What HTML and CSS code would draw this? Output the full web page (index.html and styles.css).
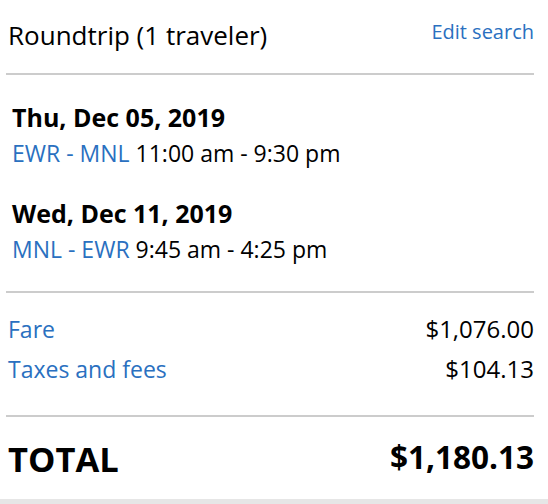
FILE: index.html
```html
<!DOCTYPE html>
<html>
<head>
<meta charset="utf-8">
<link rel="stylesheet" href="styles.css">
</head>
<body>
<div class="summary">
  <div class="header">
    <div class="title">Roundtrip (1 traveler)</div>
    <a class="edit" href="#">Edit search</a>
  </div>
  <div class="flights">
    <div class="flight">
      <div class="date">Thu, Dec 05, 2019</div>
      <div class="route"><span class="code">EWR - MNL</span> 11:00 am - 9:30 pm</div>
    </div>
    <div class="flight">
      <div class="date">Wed, Dec 11, 2019</div>
      <div class="route"><span class="code">MNL - EWR</span> 9:45 am - 4:25 pm</div>
    </div>
  </div>
  <div class="costs">
    <div class="cost-row"><span class="label">Fare</span><span class="amount">$1,076.00</span></div>
    <div class="cost-row"><span class="label">Taxes and fees</span><span class="amount">$104.13</span></div>
  </div>
  <div class="total">
    <span class="total-label">TOTAL</span>
    <span class="total-amount">$1,180.13</span>
  </div>
</div>
<div class="footer"></div>
</body>
</html>
```
FILE: styles.css
```css
html, body {
  margin: 0;
  padding: 0;
  background: #fff;
}
body {
  font-family: "Open Sans", "Liberation Sans", sans-serif;
  color: #000;
  width: 548px;
  height: 504px;
  display: flex;
  flex-direction: column;
  overflow: hidden;
}
.summary {
  margin: 0 14px 0 6px;
  flex: 1;
}
.header {
  display: flex;
  justify-content: space-between;
  align-items: flex-start;
  padding: 17px 0 20px 2px;
  border-bottom: 2px solid #ccc;
}
.title {
  font-size: 26px;
  line-height: 36px;
}
.edit {
  margin-top: 1px;
  font-size: 20px;
  line-height: 27px;
  color: #2a70c0;
  text-decoration: none;
}
.flights {
  padding: 24px 0 24px 6px;
  border-bottom: 2px solid #ccc;
}
.flight + .flight {
  margin-top: 24px;
}
.date {
  font-weight: 700;
  font-size: 25px;
  line-height: 36px;
}
.route {
  font-size: 23px;
  line-height: 36px;
}
.code {
  color: #2a70c0;
}
.costs {
  padding: 16px 0 26px 2px;
  border-bottom: 2px solid #ccc;
}
.cost-row {
  display: flex;
  justify-content: space-between;
  line-height: 40px;
}
.label {
  font-size: 23px;
  color: #2a70c0;
}
.amount {
  font-size: 24px;
}
.total {
  display: flex;
  justify-content: space-between;
  align-items: center;
  padding: 16px 0 0 2px;
  font-weight: 700;
}
.total-label {
  font-size: 34.5px;
  line-height: 48px;
}
.total-amount {
  font-size: 31.5px;
  line-height: 48px;
  padding-bottom: 4px;
}
.footer {
  height: 5px;
  background: #e6e6e6;
}
```
